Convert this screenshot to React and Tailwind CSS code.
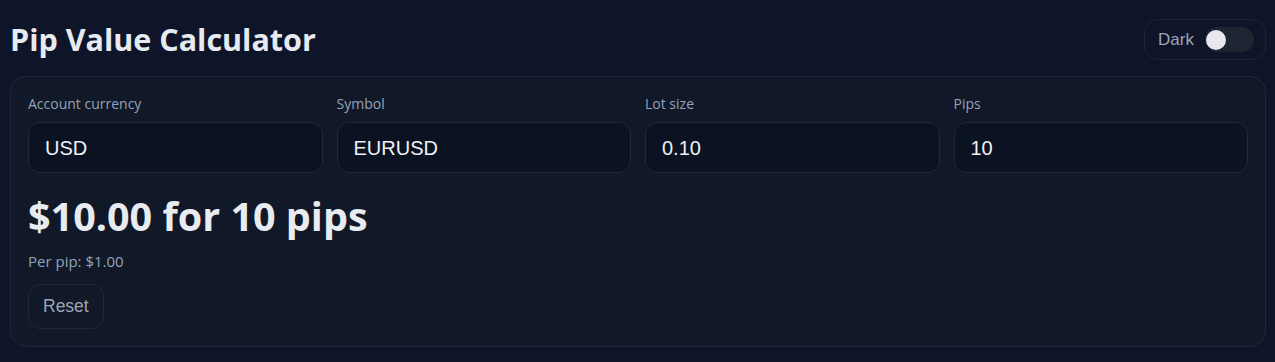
export default function App() {
  const fields = [
    { label: "Account currency", value: "USD" },
    { label: "Symbol", value: "EURUSD" },
    { label: "Lot size", value: "0.10" },
    { label: "Pips", value: "10" },
  ];
  const arial = { fontFamily: "'Liberation Sans', Arial, sans-serif" };
  return (
    <div
      className="min-h-[362px] w-full bg-[#0e1528] pl-[10px] pr-[9px] pt-[19px] pb-[15px] text-[#e5e7eb]"
      style={{ fontFamily: "'Open Sans', 'Noto Sans', sans-serif" }}
    >
      <div className="flex items-center justify-between">
        <h1 className="text-[30.5px] font-bold leading-[41px] text-[#e7eaf0]">
          Pip Value Calculator
        </h1>
        <div className="flex h-[41px] items-center gap-[11px] rounded-[14px] border border-[#1c2536] pl-[13px] pr-[11px]">
          <span className="text-[17px] text-[#9aa6b8]" style={arial}>
            Dark
          </span>
          <div className="flex h-[25px] w-[49px] items-center rounded-full bg-[#1d2533] px-[1px]">
            <div className="h-[20px] w-[20px] rounded-full bg-[#e6e8ee]" />
          </div>
        </div>
      </div>
      <div className="mt-[16px] rounded-[16px] border border-[#1e293b] bg-[#111827] p-[17px]">
        <div className="grid grid-cols-4 gap-[14px]">
          {fields.map((f) => (
            <div key={f.label} className="flex flex-col">
              <label className="text-[14px] leading-[20px] text-[#94a3b8]">{f.label}</label>
              <div
                className="mt-[8px] flex h-[51px] items-center rounded-[12px] border border-[#1e293b] bg-[#0b1222] px-[16px] text-[20px] text-[#eef0f4]"
                style={arial}
              >
                {f.value}
              </div>
            </div>
          ))}
        </div>
        <div className="mt-[19px] text-[39.5px] font-bold leading-[48px] text-[#e8ebf0]">
          $10.00 for 10 pips
        </div>
        <div className="mt-[11px] text-[15px] leading-[20px] text-[#94a3b8]">Per pip: $1.00</div>
        <button
          className="mt-[13px] h-[45px] rounded-[12px] border border-[#1e293b] bg-[#111827] px-[14px] text-[17.5px] text-[#9aa6b8]"
          style={arial}
        >
          Reset
        </button>
      </div>
    </div>
  );
}
